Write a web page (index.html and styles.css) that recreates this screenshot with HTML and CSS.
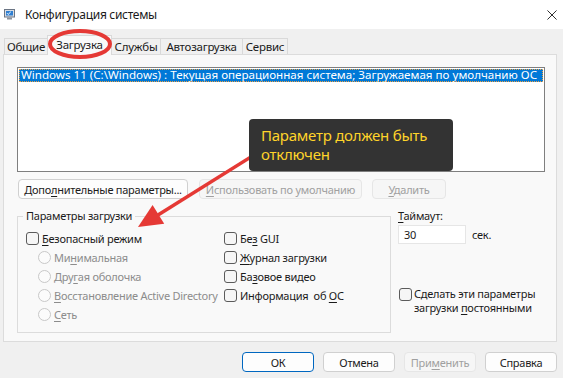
FILE: index.html
```html
<!DOCTYPE html>
<html lang="ru">
<head>
    <meta charset="UTF-8">
    <title>Конфигурация системы</title>
    <link rel="stylesheet" href="styles.css">
</head>
<body>
    <div class="window">
        <header class="titlebar">
            <svg class="app-icon" viewBox="0 0 11 11">
                <rect x="0.5" y="0.5" width="10" height="7.5" fill="#d9dde3" stroke="#6b7584"/>
                <rect x="2" y="2" width="7" height="4.5" fill="#2f7fd1"/>
                <path d="M3 4.2l1.2 1.2 2.6-2.6" stroke="#fff" stroke-width="1" fill="none"/>
                <rect x="3" y="8.5" width="5" height="2" fill="#8a929d"/>
            </svg>
            <span class="title">Конфигурация системы</span>
            <svg class="close" viewBox="0 0 11 11">
                <path d="M0.5 0.5L10.5 10.5M10.5 0.5L0.5 10.5" stroke="#1a1a1a" stroke-width="1"/>
            </svg>
        </header>

        <nav class="tabs">
            <span class="tab tab-general">Общие</span>
            <span class="tab tab-boot active">Загрузка</span>
            <span class="tab tab-services">Службы</span>
            <span class="tab tab-startup">Автозагрузка</span>
            <span class="tab tab-tools">Сервис</span>
        </nav>

        <section class="panel">
            <div class="listbox">
                <div class="os-item">Windows 11 (C:\Windows) : Текущая операционная система; Загружаемая по умолчанию ОС</div>
            </div>

            <div class="btn-row">
                <span class="btn btn-advanced"><span>Допо<u>л</u>нительные параметры...</span></span>
                <span class="btn btn-default disabled"><span><u>И</u>спользовать по умолчанию</span></span>
                <span class="btn btn-delete disabled"><span><u>У</u>далить</span></span>
            </div>

            <div class="lower">
                <div class="group">
                    <span class="legend">Параметры загрузки</span>
                    <div class="group-cols">
                        <div class="col col-left">
                            <div class="opt"><span class="box"></span><span><u>Б</u>езопасный режим</span></div>
                            <div class="opt radio disabled"><span class="dot"></span><span>Ми<u>н</u>имальная</span></div>
                            <div class="opt radio disabled"><span class="dot"></span><span>Дру<u>г</u>ая оболочка</span></div>
                            <div class="opt radio disabled"><span class="dot"></span><span><u>В</u>осстановление Active Directory</span></div>
                            <div class="opt radio disabled"><span class="dot"></span><span><u>С</u>еть</span></div>
                        </div>
                        <div class="col col-right">
                            <div class="opt"><span class="box"></span><span>Бе<u>з</u> GUI</span></div>
                            <div class="opt"><span class="box"></span><span><u>Ж</u>урнал загрузки</span></div>
                            <div class="opt"><span class="box"></span><span>Ба<u>з</u>овое видео</span></div>
                            <div class="opt"><span class="box"></span><span>Информация&nbsp; об <u>О</u>С</span></div>
                        </div>
                    </div>
                </div>

                <div class="side">
                    <div class="timeout-label"><u>Т</u>аймаут:</div>
                    <div class="timeout-row">
                        <span class="field">30</span>
                        <span class="unit">сек.</span>
                    </div>
                    <div class="persist">
                        <span class="box"></span>
                        <span class="persist-text">Сделать эти параметры<br>загрузки <u>п</u>остоянными</span>
                    </div>
                </div>
            </div>
        </section>

        <footer class="footer">
            <span class="btn btn-foot primary">ОК</span>
            <span class="btn btn-foot">Отмена</span>
            <span class="btn btn-foot disabled"><span>При<u>м</u>енить</span></span>
            <span class="btn btn-foot">Справка</span>
        </footer>

        <!-- пометки поверх скриншота -->
        <svg class="marks" viewBox="0 0 563 378">
            <ellipse cx="80" cy="44" rx="30" ry="13" fill="none" stroke="#e53935" stroke-width="4"/>
            <line x1="262" y1="150" x2="158" y2="215" stroke="#e53935" stroke-width="3.5"/>
            <polygon points="138,227 164.2,223.7 152.6,205.1" fill="#e53935"/>
        </svg>
        <div class="note">Параметр должен быть<br>отключен</div>
    </div>
</body>
</html>
```

FILE: styles.css
```css
*{
    margin: 0;
    padding: 0;
    box-sizing: border-box;
}
body{
    width: 563px;
    height: 378px;
    overflow: hidden;
    background-color: #f0f0f0;
    font-family: "Noto Sans", "Open Sans", sans-serif;
    font-size: 11px;
    letter-spacing: -0.25px;
    color: #1b1b1b;
}
u{
    text-underline-offset: 2px;
}
.window{
    position: relative;
    height: 378px;
}

/* заголовок окна */
.titlebar{
    height: 29px;
    display: flex;
    align-items: center;
    padding: 0 6px 0 4px;
    background-color: #ffffff;
}
.app-icon{
    width: 11px;
    height: 11px;
}
.title{
    margin-left: 10px;
    font-size: 12px;
    letter-spacing: -0.3px;
}
.close{
    margin-left: auto;
    width: 10px;
    height: 10px;
}

/* вкладки */
.tabs{
    position: relative;
    z-index: 1;
    display: flex;
    align-items: flex-end;
    height: 25px;
    padding-left: 4px;
    font-size: 11.5px;
}
.tab{
    height: 16px;
    line-height: 15px;
    text-align: center;
    border: 1px solid #d9d9d9;
    border-bottom: none;
    margin-left: -1px;
    background-color: #f0f0f0;
}
.tab-general{ width: 44px; margin-left: 0; }
.tab-boot{ width: 65px; }
.tab-services{ width: 50px; }
.tab-startup{ width: 83px; }
.tab-tools{ width: 46px; }
.tab.active{
    height: 20px;
    line-height: 18px;
    margin-bottom: -1px;
    background-color: #f9f9f9;
    position: relative;
}

.panel{
    height: 288px;
    margin: 0 6px 0 3px;
    padding: 12px 0 0 13px;
    border: 1px solid #dcdcdc;
    background-color: #f9f9f9;
}

.listbox{
    width: 528px;
    height: 105px;
    padding: 1px;
    border: 1px solid #7f7f7f;
    background-color: #ffffff;
}
.os-item{
    height: 13px;
    line-height: 12px;
    padding-left: 2px;
    color: #ffffff;
    background-color: #0078d7;
    outline: 1px dotted #f0a040;
    outline-offset: -1px;
    white-space: nowrap;
    font-size: 11.6px;
    letter-spacing: 0;
}

/* кнопки */
.btn{
    display: inline-flex;
    align-items: center;
    justify-content: center;
    height: 20px;
    border: 1px solid #d0d0d0;
    border-radius: 4px;
    background-color: #fdfdfd;
    white-space: nowrap;
}
.btn.disabled{
    color: #a0a0a0;
    border-color: #e6e6e6;
    background-color: #f6f6f6;
}
.btn-row{
    display: flex;
    margin-top: 7px;
    padding-left: 1px;
}
.btn-advanced{ width: 170px; }
.btn-default{ width: 163px; margin-left: 11px; }
.btn-delete{ width: 74px; margin-left: 10px; }

.lower{
    display: flex;
}
.group{
    width: 374px;
    height: 117px;
    margin-top: 17px;
    border: 1px solid #dcdcdc;
}
.legend{
    display: block;
    width: fit-content;
    height: 16px;
    line-height: 16px;
    margin: -9px 0 0 5px;
    padding: 0 3px;
    background-color: #f9f9f9;
}
.group-cols{
    display: flex;
    margin-top: 5px;
}
.col-left{
    width: 206px;
    padding-left: 8px;
}
.opt{
    display: flex;
    align-items: center;
    height: 19px;
    white-space: nowrap;
}
.box{
    flex: none;
    width: 13px;
    height: 13px;
    margin-right: 3px;
    border: 1px solid #5b5b5b;
    border-radius: 3px;
    background-color: #f6f6f6;
}
.radio .dot{
    flex: none;
    width: 13px;
    height: 13px;
    margin: 0 3px 0 12px;
    border: 1px solid #c8c8c8;
    border-radius: 50%;
    background-color: #fbfbfb;
}
.opt.disabled{
    color: #8c8c8c;
}

.side{
    margin: 9px 0 0 7px;
}
.timeout-label{
    height: 16px;
    line-height: 16px;
}
.timeout-row{
    display: flex;
    align-items: center;
    margin-top: 1px;
}
.field{
    width: 68px;
    height: 19px;
    line-height: 18px;
    padding-left: 5px;
    border: 1px solid #e6e6e6;
    background-color: #ffffff;
}
.unit{
    margin-left: 6px;
}
.persist{
    display: flex;
    align-items: flex-start;
    margin-top: 43px;
    padding-left: 1px;
}
.persist .box{
    margin: 1px 2px 0 0;
}
.persist-text{
    line-height: 14px;
}

.footer{
    display: flex;
    justify-content: flex-end;
    gap: 9px;
    margin-top: 10px;
    padding-right: 6px;
}
.btn-foot{
    width: 72px;
}
.btn.primary{
    border-color: #0067c0;
}

/* пометки */
.marks{
    position: absolute;
    left: 0;
    top: 0;
    width: 563px;
    height: 378px;
    z-index: 2;
    pointer-events: none;
}
.note{
    position: absolute;
    left: 249px;
    top: 119px;
    width: 204px;
    height: 52px;
    z-index: 3;
    padding: 7px 0 0 12px;
    border-radius: 4px;
    background-color: #333333;
    color: #ffd42a;
    font-size: 15px;
    line-height: 19px;
}
```
